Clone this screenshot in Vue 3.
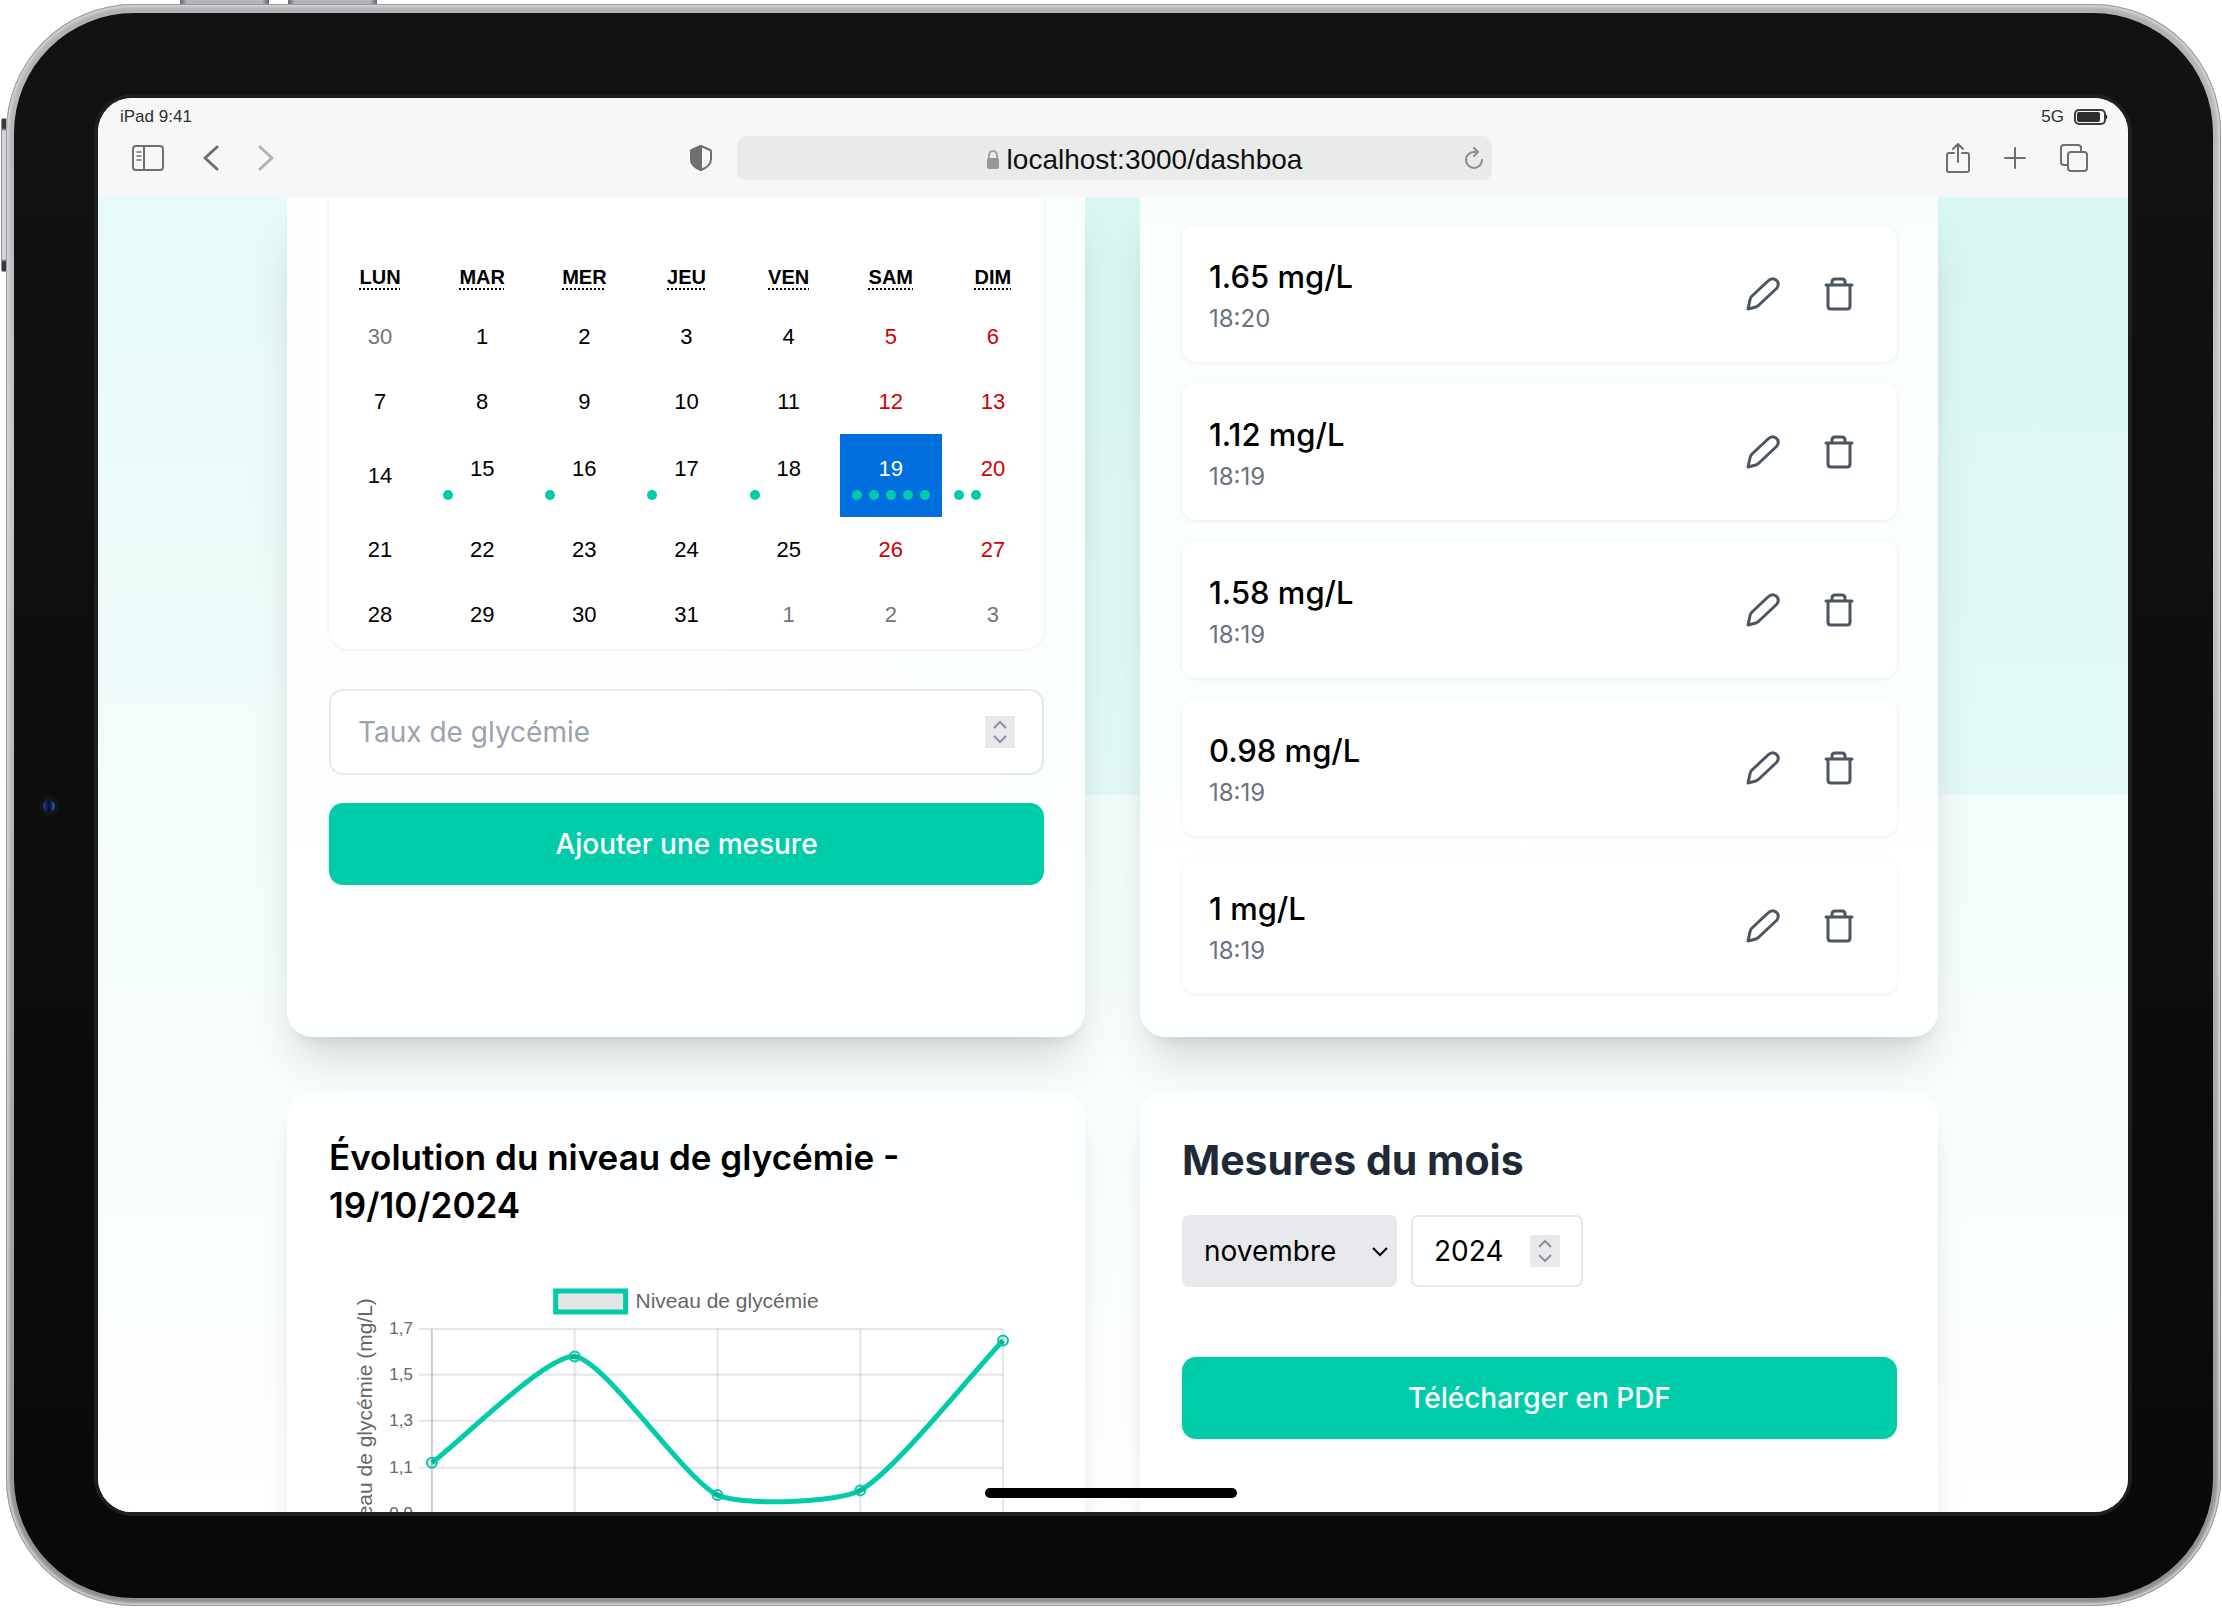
<script setup>
const weekdays = [
  ['lun', 'lundi'], ['mar', 'mardi'], ['mer', 'mercredi'], ['jeu', 'jeudi'],
  ['ven', 'vendredi'], ['sam', 'samedi'], ['dim', 'dimanche'],
]
const dots = { 15: 1, 16: 1, 17: 1, 18: 1, 19: 5, 20: 2 }
const weeks = Array.from({ length: 5 }, (_, w) =>
  Array.from({ length: 7 }, (_, d) => {
    const n = w * 7 + d
    const other = n < 1 || n > 31
    return {
      label: n < 1 ? 30 : n > 31 ? n - 31 : n,
      other,
      weekend: d > 4 && !other,
      active: n === 19,
      dots: other ? 0 : dots[n] || 0,
    }
  }),
)

const measures = [
  { value: '1.65', time: '18:20' },
  { value: '1.12', time: '18:19' },
  { value: '1.58', time: '18:19' },
  { value: '0.98', time: '18:19' },
  { value: '1', time: '18:19' },
]

// Chart geometry
const left = 103
const step = 143
const top = 59
const unit = 231
const xAt = (i) => left + i * step
const yAt = (v) => top + (1.7 - v) * unit
const ticks = [1.7, 1.5, 1.3, 1.1, 0.9].map((v) => ({
  y: Math.round(yAt(v)),
  label: v.toFixed(1).replace('.', ','),
}))
const points = [1.12, 1.58, 0.98, 1, 1.65].map((v, i) => ({ x: xAt(i), y: yAt(v) }))

function smoothPath(pts, tension) {
  const ctrl = pts.map((p, i) => {
    const a = pts[i - 1] || p
    const b = pts[i + 1] || p
    const d0 = Math.hypot(p.x - a.x, p.y - a.y)
    const d1 = Math.hypot(b.x - p.x, b.y - p.y)
    const f0 = (tension * d0) / (d0 + d1)
    const f1 = (tension * d1) / (d0 + d1)
    return {
      inX: p.x - f0 * (b.x - a.x), inY: p.y - f0 * (b.y - a.y),
      outX: p.x + f1 * (b.x - a.x), outY: p.y + f1 * (b.y - a.y),
    }
  })
  return pts.reduce((d, p, i) => {
    if (!i) return `M${p.x} ${p.y}`
    const o = ctrl[i - 1]
    const c = ctrl[i]
    return `${d} C${o.outX} ${o.outY} ${c.inX} ${c.inY} ${p.x} ${p.y}`
  }, '')
}
const curve = smoothPath(points, 0.2)
</script>

<template>
  <div class="stage">
    <span class="key key-a"></span>
    <span class="key key-b"></span>
    <span class="key key-side"></span>
    <div class="device">
      <div class="bezel">
        <span class="camera"></span>
        <div class="screen">
          <header class="browser">
            <div class="status">
              <span>iPad 9:41</span>
              <span class="signal">
                5G
                <svg width="34" height="16" viewBox="0 0 34 16" aria-hidden="true">
                  <rect x="1" y="1" width="30" height="14" rx="4" fill="none" stroke="#3a3d3c" stroke-width="2" />
                  <rect x="3" y="3" width="23" height="10" rx="2" fill="#2c2f2e" />
                  <path d="M32 6 Q34 8 32 10Z" fill="#2c2f2e" stroke="#2c2f2e" />
                </svg>
              </span>
            </div>
            <div class="toolbar">
              <div class="tools tools-left">
                <button type="button" aria-label="Barre latérale">
                  <svg width="32" height="26" viewBox="0 0 32 26">
                    <rect x="1" y="1" width="30" height="24" rx="3" />
                    <path d="M12 1V25" />
                    <path d="M5 7H9M5 11H9M5 15H9" stroke-width="1.5" />
                  </svg>
                </button>
                <button type="button" aria-label="Précédent">
                  <svg width="16" height="26" viewBox="0 0 16 26"><path d="M14 2L2 13L14 24" stroke-width="3" /></svg>
                </button>
                <button type="button" class="faded" aria-label="Suivant">
                  <svg width="16" height="26" viewBox="0 0 16 26"><path d="M2 2L14 13L2 24" stroke-width="3" /></svg>
                </button>
                <button type="button" class="shield" aria-label="Confidentialité">
                  <svg width="24" height="28" viewBox="0 0 24 28">
                    <path d="M12 2L21 6Q22 6 22 8V15Q22 22 12 26Q2 22 2 15V8Q2 6 3 6Z" />
                    <path d="M12 2L3 6Q2 6 2 8V15Q2 22 12 26Z" fill="#6d706f" />
                  </svg>
                </button>
              </div>
              <div class="address">
                <span class="url">
                  <svg width="14" height="20" viewBox="0 0 14 20" aria-hidden="true">
                    <path d="M3 9V6Q3 1 7 1T11 6V9" fill="none" stroke="#a4a6a5" stroke-width="2" />
                    <rect x="1" y="8" width="12" height="11" rx="2" fill="#959796" stroke="none" />
                  </svg>
                  localhost:3000/dashboa
                </span>
                <button type="button" class="reload" aria-label="Recharger">
                  <svg width="20" height="24" viewBox="0 0 20 24">
                    <path d="M14 6H11A8 8 0 1 0 18 14M10 2L14 6L10 10" />
                  </svg>
                </button>
              </div>
              <div class="tools tools-right">
                <button type="button" aria-label="Partager">
                  <svg width="26" height="32" viewBox="0 0 26 32">
                    <path d="M9 11H4Q2 11 2 13V28Q2 30 4 30H22Q24 30 24 28V13Q24 11 22 11H17M13 20V2M8 7L13 2L18 7" />
                  </svg>
                </button>
                <button type="button" aria-label="Nouvel onglet">
                  <svg width="24" height="24" viewBox="0 0 24 24"><path d="M12 2V22M2 12H22" /></svg>
                </button>
                <button type="button" aria-label="Onglets">
                  <svg width="30" height="30" viewBox="0 0 30 30">
                    <rect x="9" y="9" width="19" height="19" rx="3" />
                    <path d="M8 22H5Q2 22 2 19V5Q2 2 5 2H19Q22 2 22 5V8" />
                  </svg>
                </button>
              </div>
            </div>
          </header>

          <main class="page">
            <div class="grid">
              <section class="card card-top">
                <div class="calendar">
                  <table>
                    <thead>
                      <tr>
                        <th v-for="d in weekdays" :key="d[0]" scope="col"><abbr :title="d[1]">{{ d[0] }}</abbr></th>
                      </tr>
                    </thead>
                    <tbody>
                      <tr v-for="(week, w) in weeks" :key="w">
                        <td v-for="(day, d) in week" :key="d">
                          <button
                            type="button"
                            class="day"
                            :class="{ other: day.other, weekend: day.weekend, active: day.active, marked: day.dots }"
                          >
                            <span>{{ day.label }}</span>
                            <span v-if="day.dots" class="dots"><i v-for="k in day.dots" :key="k"></i></span>
                          </button>
                        </td>
                      </tr>
                    </tbody>
                  </table>
                </div>
                <form class="entry" @submit.prevent>
                  <div class="number rate">
                    <input type="number" placeholder="Taux de glycémie" aria-label="Taux de glycémie" />
                    <svg class="spin" width="30" height="32" viewBox="0 0 30 32" aria-hidden="true">
                      <path d="M9 12L15 6L21 12M9 20L15 26L21 20" />
                    </svg>
                  </div>
                  <button type="submit" class="primary">Ajouter une mesure</button>
                </form>
              </section>

              <section class="card card-top">
                <ul class="measures">
                  <li v-for="(m, i) in measures" :key="i">
                    <div class="reading">
                      <p class="value">{{ m.value }} mg/L</p>
                      <p class="time">{{ m.time }}</p>
                    </div>
                    <button type="button" aria-label="Modifier">
                      <svg width="34" height="34" viewBox="0 0 34 34">
                        <path d="M2 32L4 23Q4 21 6 19L22 4Q26 0 30 3T31 11L14 27Q12 29 10 30Z" />
                      </svg>
                    </button>
                    <button type="button" aria-label="Supprimer">
                      <svg width="30" height="34" viewBox="0 0 30 34">
                        <path d="M2 8H28M4 8V29Q4 32 7 32H23Q26 32 26 29V8M8 8V5Q8 2 11 2H18Q21 2 21 5V8" />
                      </svg>
                    </button>
                  </li>
                </ul>
              </section>

              <section class="card">
                <h2 class="chart-title">Évolution du niveau de glycémie - 19/10/2024</h2>
                <svg class="chart" viewBox="0 0 716 320" role="img" aria-label="Niveau de glycémie">
                  <rect x="227" y="21" width="70" height="21" fill="#e5e5e5" stroke="#00ccaa" stroke-width="5" />
                  <text x="307" y="38" class="legend">Niveau de glycémie</text>
                  <text transform="translate(43 278) rotate(-90)" class="legend">Niveau de glycémie (mg/L)</text>
                  <g v-for="t in ticks" :key="t.label">
                    <path :d="`M90 ${t.y}H675`" class="rule" />
                    <text x="84" :y="t.y + 5" text-anchor="end" class="tick">{{ t.label }}</text>
                  </g>
                  <path v-for="(p, i) in points" :key="i" :d="`M${p.x} ${top}V320`" class="rule" :class="{ axis: i === 0 }" />
                  <path :d="curve" class="curve" />
                  <circle v-for="(p, i) in points" :key="`c${i}`" :cx="p.x" :cy="p.y" r="5" class="point" />
                </svg>
              </section>

              <section class="card">
                <h2 class="month-title">Mesures du mois</h2>
                <div class="filters">
                  <div class="month">
                    <select aria-label="Mois">
                      <option>novembre</option>
                    </select>
                    <svg class="caret" width="18" height="12" viewBox="0 0 18 12" aria-hidden="true"><path d="M2 2L9 9L16 2" /></svg>
                  </div>
                  <div class="number year">
                    <input type="number" value="2024" aria-label="Année" />
                    <svg class="spin" width="30" height="32" viewBox="0 0 30 32" aria-hidden="true">
                      <path d="M9 12L15 6L21 12M9 20L15 26L21 20" />
                    </svg>
                  </div>
                </div>
                <button type="button" class="primary">Télécharger en PDF</button>
              </section>
            </div>
          </main>
          <span class="home"></span>
        </div>
      </div>
    </div>
  </div>
</template>

<style>
html,
body {
  margin: 0;
  background: #fff;
}
</style>

<style scoped>
* {
  box-sizing: border-box;
}
button,
input,
select {
  font: inherit;
  color: inherit;
  margin: 0;
}
button {
  border: 0;
  padding: 0;
  background: none;
  cursor: pointer;
}
svg {
  display: block;
}
.stage {
  position: relative;
  height: 100vh;
  padding: 4px 1px 2px 6px;
  overflow: hidden;
  font-family: Inter, "Liberation Sans", sans-serif;
}
.key {
  position: absolute;
  background: linear-gradient(90deg, #66676a, #b4b5b8 8%, #b4b5b8 92%, #66676a);
}
.key-a,
.key-b {
  top: 0;
  width: 89px;
  height: 5px;
}
.key-a {
  left: 180px;
}
.key-b {
  left: 288px;
}
.key-side {
  left: 1px;
  top: 118px;
  width: 6px;
  height: 154px;
  border: 1px solid #8e8f91;
  border-radius: 2px;
  background: linear-gradient(#3a3a3c 6%, #d4d5d8 8%, #d4d5d8 92%, #3a3a3c 94%);
}
.device {
  position: relative;
  height: 100%;
  padding: 9px 8px 8px;
  border-radius: 128px;
  background: linear-gradient(#b0b1b4, #c6c7ca 30%, #8e8f90);
  box-shadow: inset 0 0 0 1px #9a9b9d, inset 0 0 3px 3px #d6d7da;
}
.bezel {
  position: relative;
  height: 100%;
  padding: 85px 85px 86px 84px;
  border-radius: 120px;
  background: linear-gradient(#121212, #090909);
}
.camera {
  position: absolute;
  left: 25px;
  top: 50%;
  width: 20px;
  height: 20px;
  margin-top: -10px;
  border: 4px solid #151517;
  border-radius: 50%;
  background: linear-gradient(90deg, #24489c, #0a0a20 50%, #2268b0);
}
.screen {
  position: relative;
  display: flex;
  flex-direction: column;
  height: 100%;
  overflow: hidden;
  border-radius: 34px;
  background: #fff;
  box-shadow: 0 0 0 4px #1f1f1f;
}
.browser {
  flex: none;
  height: 99px;
  padding: 8px 20px 0 22px;
  background: #f6f8f7;
  font-family: "Liberation Sans", Arial, sans-serif;
}
.status {
  display: flex;
  justify-content: space-between;
  align-items: center;
  height: 22px;
  font-size: 17px;
  color: #2c2f2e;
}
.signal {
  display: flex;
  align-items: center;
  gap: 10px;
}
.toolbar {
  display: grid;
  grid-template-columns: 1fr auto 1fr;
  align-items: center;
  height: 60px;
}
.toolbar svg {
  fill: none;
  stroke: #6d706f;
  stroke-width: 2;
  stroke-linecap: round;
  stroke-linejoin: round;
}
.tools {
  display: flex;
  align-items: center;
}
.tools-left {
  gap: 39px;
  padding-left: 12px;
}
.tools-right {
  justify-content: flex-end;
  gap: 32px;
  padding-right: 19px;
}
.faded {
  opacity: 0.5;
}
.shield {
  margin-left: auto;
  margin-right: 24px;
}
.address {
  display: flex;
  align-items: center;
  width: 755px;
  height: 44px;
  padding: 0 8px 0 28px;
  border-radius: 9px;
  background: #e9ebea;
  font-size: 28px;
  line-height: 44px;
  color: #111;
}
.url {
  flex: 1;
  display: flex;
  justify-content: center;
  align-items: center;
  gap: 7px;
  padding: 3px 0 0 60px;
}
.address .reload svg {
  stroke: #8c8e8d;
}
.page {
  flex: 1;
  min-height: 0;
  overflow: hidden;
  padding: 0 190px 0 189px;
  background:
    linear-gradient(90deg, #00ccaa00 18%, #00ccaa0f 48%) 0 0 / 100% 598px no-repeat,
    linear-gradient(#e6faf7, #f2fcfb 598px, #fff);
}
.grid {
  display: grid;
  grid-template-columns: 1fr 1fr;
  gap: 55px;
}
.card {
  min-height: 500px;
  padding: 41px 41px 42px 42px;
  border-radius: 26px;
  background: rgba(255, 255, 255, 0.85);
  box-shadow: 0 27px 34px -7px rgba(0, 0, 0, 0.1), 0 11px 14px -8px rgba(0, 0, 0, 0.1);
}
.card-top {
  padding-top: 0;
  border-radius: 0 0 26px 26px;
  box-shadow: 0 30px 48px -12px rgba(0, 0, 0, 0.16), 0 11px 14px -8px rgba(0, 0, 0, 0.08);
}
.calendar {
  padding: 56px 0 2px;
  border-radius: 0 0 20px 20px;
  background: #fff;
  box-shadow: 0 1px 4px rgba(0, 0, 0, 0.07);
  overflow: hidden;
  font-family: "Liberation Sans", Arial, sans-serif;
}
table {
  width: 100%;
  table-layout: fixed;
  border-collapse: collapse;
}
th,
td {
  padding: 0;
}
th {
  height: 51px;
  padding-bottom: 3px;
  font-size: 20px;
  line-height: 24px;
  text-transform: uppercase;
}
td {
  height: 65px;
}
abbr {
  text-decoration: underline dotted 2px;
  text-underline-offset: 4px;
}
.day {
  display: flex;
  flex-direction: column;
  justify-content: center;
  width: 100%;
  height: 65px;
  padding: 0 12px;
  font-size: 22px;
  line-height: 25px;
  text-align: center;
  color: #000;
}
.day.marked {
  height: 83px;
  padding-top: 4px;
}
.day.weekend {
  color: #d10000;
}
.day.other {
  color: #757575;
}
.day.active {
  background: #006edc;
  color: #fff;
}
.dots {
  display: flex;
  gap: 7px;
  margin-top: 9px;
}
.dots i {
  width: 10px;
  height: 10px;
  border-radius: 50%;
  background: #00ccaa;
}
.entry {
  margin-top: 40px;
}
.number {
  display: flex;
  align-items: center;
  border: 2px solid #e5e7eb;
  background: #fff;
}
.number input {
  flex: 1;
  min-width: 0;
  padding: 0;
  border: 0;
  outline: 0;
  background: none;
  font-size: 28px;
  line-height: 40px;
  appearance: textfield;
}
.number input::-webkit-inner-spin-button {
  appearance: none;
}
.number input::placeholder {
  color: #9ca3af;
}
.spin {
  flex: none;
  background: #e9e9ed;
  fill: none;
  stroke: #8f8f9d;
  stroke-width: 2;
}
.rate {
  height: 86px;
  padding: 0 27px;
  border-radius: 14px;
}
.primary {
  display: block;
  width: 100%;
  height: 82px;
  border-radius: 14px;
  background: #00ccaa;
  color: #fff;
  font-size: 28px;
  font-weight: 500;
}
.entry .primary {
  margin-top: 28px;
}
.measures {
  display: grid;
  gap: 21px;
  margin: 0;
  padding: 28px 0 1px;
  list-style: none;
}
.measures li {
  display: flex;
  align-items: center;
  height: 137px;
  padding: 0 43px 0 27px;
  border-radius: 14px;
  background: #fff;
  box-shadow: 0 1px 4px rgba(0, 0, 0, 0.07);
}
.reading {
  flex: 1;
  padding-top: 2px;
}
.reading p {
  margin: 0;
}
.value {
  font-size: 31px;
  font-weight: 500;
  line-height: 48px;
  color: #000;
}
.time {
  font-size: 24px;
  line-height: 36px;
  color: #6b7280;
}
.measures button + button {
  margin-left: 44px;
}
.measures svg {
  fill: none;
  stroke: #4b5563;
  stroke-width: 3;
  stroke-linejoin: round;
  stroke-linecap: round;
}
h2 {
  margin: 0;
}
.chart-title {
  font-size: 35px;
  line-height: 48px;
  font-weight: 600;
  color: #000;
}
.chart {
  width: 100%;
  margin-top: 41px;
  font-family: "Liberation Sans", Arial, sans-serif;
}
.chart text {
  fill: #666;
}
.legend {
  font-size: 21px;
}
.tick {
  font-size: 17px;
}
.rule {
  stroke: rgba(0, 0, 0, 0.1);
  stroke-width: 2;
}
.axis {
  stroke: rgba(0, 0, 0, 0.2);
}
.curve {
  fill: none;
  stroke: #00ccaa;
  stroke-width: 5;
}
.point {
  fill: rgba(0, 0, 0, 0.1);
  stroke: #00ccaa;
  stroke-width: 2;
}
.month-title {
  font-size: 41px;
  line-height: 54px;
  font-weight: 700;
  color: #1f2937;
}
.filters {
  display: flex;
  gap: 14px;
  margin: 28px 0 70px;
}
.month {
  position: relative;
  width: 215px;
}
.month select {
  width: 100%;
  height: 72px;
  padding: 0 22px;
  border: 0;
  border-radius: 7px;
  background: #e9e9ed;
  appearance: none;
  font-size: 28px;
  color: #000;
}
.caret {
  position: absolute;
  right: 8px;
  top: 31px;
  fill: none;
  stroke: #000;
  stroke-width: 2;
  pointer-events: none;
}
.year {
  width: 172px;
  height: 72px;
  padding: 0 21px;
  border-radius: 7px;
}
.home {
  position: absolute;
  left: 50%;
  bottom: 14px;
  width: 252px;
  height: 10px;
  margin-left: -128px;
  border-radius: 5px;
  background: #000;
}
</style>
